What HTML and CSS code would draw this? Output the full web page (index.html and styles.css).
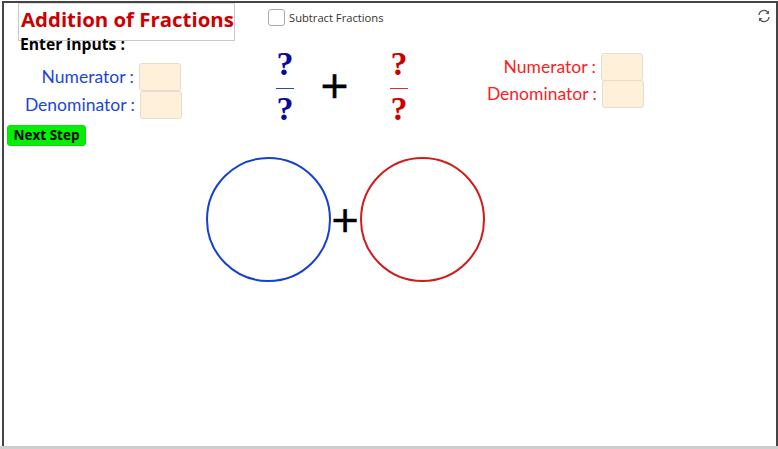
FILE: index.html
```html
<!DOCTYPE html>
<html lang="en">
<head>
<meta charset="utf-8">
<title>Addition of Fractions</title>
<link rel="stylesheet" href="styles.css">
</head>
<body>
<main class="applet">
  <h1 class="title">Addition of Fractions</h1>
  <div class="enter">Enter inputs :</div>

  <label class="check"><span class="box"></span><span>Subtract Fractions</span></label>

  <svg class="reset" width="14" height="14" viewBox="0 0 14 14" fill="none" stroke="#555" stroke-width="1.3">
    <path d="M2 6 A5 5 0 0 1 11 3.4"/>
    <path d="M12 8 A5 5 0 0 1 3 10.6"/>
    <path d="M12 1.4 L12 5 L8.6 5 Z" fill="#555" stroke="none"/>
    <path d="M2 12.6 L2 9 L5.4 9 Z" fill="#555" stroke="none"/>
  </svg>

  <div class="field blue num-l"><span class="lab">Numerator :</span><span class="inp"></span></div>
  <div class="field blue den-l"><span class="lab">Denominator :</span><span class="inp"></span></div>
  <div class="field red num-r"><span class="lab">Numerator :</span><span class="inp"></span></div>
  <div class="field red den-r"><span class="lab">Denominator :</span><span class="inp"></span></div>

  <button class="next">Next Step</button>

  <div class="frac frac-l"><span>?</span><i></i><span>?</span></div>
  <div class="plus plus-top">+</div>
  <div class="frac frac-r"><span>?</span><i></i><span>?</span></div>

  <div class="circle circle-l"></div>
  <div class="plus plus-mid">+</div>
  <div class="circle circle-r"></div>
</main>
</body>
</html>
```
FILE: styles.css
```css
html, body { margin: 0; padding: 0; background: #fff; }
body { width: 778px; height: 449px; overflow: hidden; }

.applet {
  position: relative;
  box-sizing: border-box;
  width: 778px;
  height: 449px;
  border: 2px solid #fff;
  border-bottom: 0;
  font-family: "Open Sans", "Liberation Sans", sans-serif;
  background: #fff;
}
.applet::before {
  content: "";
  position: absolute;
  left: 0;
  top: -1px;
  right: -2px;
  bottom: 0;
  border: 2px solid #444;
  border-bottom: 0;
  pointer-events: none;
}
.applet::after {
  content: "";
  position: absolute;
  left: -2px;
  right: -2px;
  bottom: 0;
  height: 3px;
  background: #cfcfcf;
}

.title {
  position: absolute;
  left: 16px;
  top: 1px;
  width: 217px;
  height: 38px;
  margin: 0;
  box-sizing: border-box;
  border: 1px solid #c8c8c8;
  border-top-color: #ddd;
  color: #cc0000;
  font-size: 20.4px;
  font-weight: 700;
  line-height: 31px;
  white-space: nowrap;
  padding-left: 2px;
}
.enter {
  position: absolute;
  left: 18px;
  top: 32px;
  font-size: 15.7px;
  font-weight: 700;
  line-height: 20px;
  color: #000;
}

.check {
  position: absolute;
  left: 266px;
  top: 7px;
  display: flex;
  align-items: center;
  gap: 4px;
  font-size: 11.2px;
  color: #333;
}
.box {
  width: 15px;
  height: 15px;
  border: 1px solid #aaa;
  border-radius: 3px;
  background: #fff;
}
.reset { position: absolute; left: 755px; top: 7px; }

.field {
  position: absolute;
  display: flex;
  align-items: center;
  gap: 5px;
  font-family: "Lato", "Open Sans", sans-serif;
  font-size: 17.5px;
  line-height: 28px;
  white-space: nowrap;
}
.field.blue { color: #1c46d8; }
.field.red { color: #fa1e1e; }
.num-l { right: 595px; top: 61px; }
.den-l { right: 594px; top: 89px; }
.num-r { right: 133px; top: 51px; }
.den-r { right: 132px; top: 78px; }
.inp {
  width: 40px;
  height: 26px;
  background: #fff0d9;
  border: 1px solid #e4ddd0;
  border-radius: 3px;
}

.next {
  position: absolute;
  left: 5px;
  top: 123px;
  width: 79px;
  height: 21px;
  padding: 0;
  border: 1px solid #12d812;
  border-radius: 3px;
  background: #03f003;
  color: #000;
  font-family: "Open Sans", "Liberation Sans", sans-serif;
  font-size: 13.5px;
  font-weight: 700;
  line-height: 19px;
}

.frac {
  position: absolute;
  top: 44px;
  width: 20px;
  display: flex;
  flex-direction: column;
  align-items: center;
  font-family: "Liberation Serif", serif;
  font-weight: 700;
  font-size: 34px;
  line-height: 36px;
}
.frac span { height: 36px; }
.frac i { display: block; width: 18px; height: 1px; margin: 6px 0 2px; }
.frac-l { left: 273px; color: #0b0b99; }
.frac-l i { background: #2a48b8; }
.frac-r { left: 387px; color: #cc0000; }
.frac-r i { background: #d83030; }

.plus {
  position: absolute;
  font-family: "DejaVu Sans", sans-serif;
  color: #000;
  line-height: 1;
  -webkit-text-stroke: 0.6px #000;
}
.plus-top { left: 317px; top: 65px; font-size: 37px; }
.plus-mid { left: 328px; top: 200px; font-size: 36px; }

.circle {
  position: absolute;
  top: 155px;
  width: 125px;
  height: 125px;
  box-sizing: border-box;
  border-radius: 50%;
  border: 2px solid;
}
.circle-l { left: 204px; border-color: #1540d0; }
.circle-r { left: 358px; border-color: #d01c1c; }
```
